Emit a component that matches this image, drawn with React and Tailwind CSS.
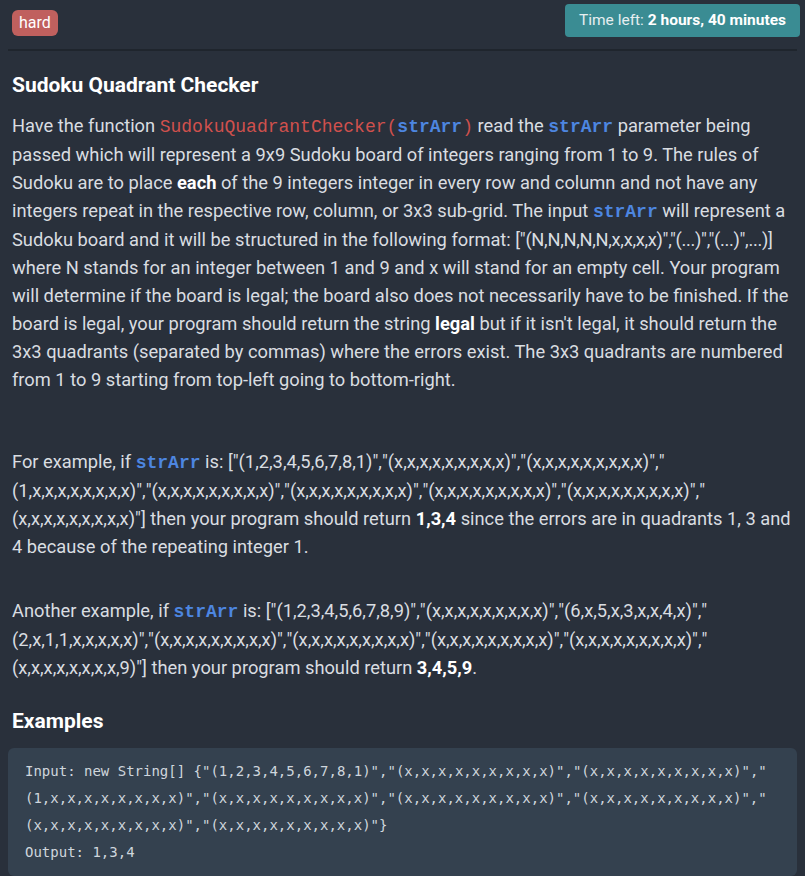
import React from "react";

const Fn = ({ children }) => (
  <code className="font-['Liberation_Mono',monospace] text-[18px] text-[#d0504d]">{children}</code>
);

const Arg = ({ children }) => (
  <code className="font-['Liberation_Mono',monospace] text-[18px] font-bold text-[#4d86e0]">{children}</code>
);

// row strings joined with a break opportunity after each separator
const Rows = ({ rows }) => (
  <>
    [
    {rows.map((r, i) => (
      <React.Fragment key={i}>
        "{r}"{i < rows.length - 1 ? "," : ""}
        {i < rows.length - 1 && <wbr />}
      </React.Fragment>
    ))}
    ]
  </>
);

const X = "(x,x,x,x,x,x,x,x,x)";

export default function App() {
  return (
    <div className="min-h-screen bg-[#29303b] font-['Roboto',sans-serif] text-[18.3px] text-[#d9dde1]">
      <div className="flex items-start justify-between pl-3 pr-[5px] pt-1">
        <span className="mt-[6px] rounded-md bg-[#c0605e] px-[7px] py-[1px] text-[16px] text-white">
          hard
        </span>
        <div className="rounded bg-[#3a8c93] px-[14px] py-[5px] text-[15.5px] text-[#e6eef0]">
          Time left: <b className="text-white">2 hours, 40 minutes</b>
        </div>
      </div>

      <hr className="mx-2 mt-3 border-t-2 border-[#1f252d]" />

      <div className="pl-3 pr-2">
        <h2 className="mt-[19px] text-[21px] font-bold text-white">Sudoku Quadrant Checker</h2>

        <p className="mt-[10px] leading-[28px]">
          Have the function <Fn>SudokuQuadrantChecker(</Fn>
          <Arg>strArr</Arg>
          <Fn>)</Fn> read the <Arg>strArr</Arg> parameter being passed which will represent a 9x9
          Sudoku board of integers ranging from 1 to 9. The rules of Sudoku are to place{" "}
          <b className="text-white">each</b> of the 9 integers integer in every row and column and not
          have any integers repeat in the respective row, column, or 3x3 sub-grid. The input{" "}
          <Arg>strArr</Arg> will represent a Sudoku board and it will be structured in the following
          format: <span className="tracking-[-0.3px]">["(N,N,N,N,N,x,x,x,x)","(...)","(...)",...)]</span>{" "}
          where N stands for an integer between 1 and 9 and x will stand for an empty cell. Your program
          will determine if the board is legal; the board also does not necessarily have to be finished.
          If the board is legal, your program should return the string{" "}
          <b className="text-white">legal</b> but if it isn't legal, it should return the 3x3 quadrants
          (separated by commas) where the errors exist. The 3x3 quadrants are numbered from 1 to 9
          starting from top-left going to bottom-right.
        </p>

        <p className="mt-[54px] leading-[28px]">
          For example, if <Arg>strArr</Arg> is:{" "}
          <Rows rows={["(1,2,3,4,5,6,7,8,1)", X, X, "(1,x,x,x,x,x,x,x,x)", X, X, X, X, X]} /> then your
          program should return <b className="text-white">1,3,4</b> since the errors are in quadrants 1,
          3 and 4 because of the repeating integer 1.
        </p>

        <p className="mt-[36px] leading-[28px]">
          Another example, if <Arg>strArr</Arg> is:{" "}
          <Rows
            rows={[
              "(1,2,3,4,5,6,7,8,9)",
              X,
              "(6,x,5,x,3,x,x,4,x)",
              "(2,x,1,1,x,x,x,x,x)",
              X,
              X,
              X,
              X,
              "(x,x,x,x,x,x,x,x,9)",
            ]}
          />{" "}
          then your program should return <b className="text-white">3,4,5,9</b>.
        </p>

        <h3 className="mt-[24px] text-[21px] font-bold text-white">Examples</h3>
      </div>

      <div className="mx-2 mt-[11px] rounded-md bg-[#34414f] px-[17px] py-[10px] font-['DejaVu_Sans_Mono',monospace] text-[14px] leading-[27px] text-[#cfd6dd]">
        <div className="break-all">
          Input: new String[] {"{"}"(1,2,3,4,5,6,7,8,1)","(x,x,x,x,x,x,x,x,x)","(x,x,x,x,x,x,x,x,x)","(1,x,x,x,x,x,x,x,x)","(x,x,x,x,x,x,x,x,x)","(x,x,x,x,x,x,x,x,x)","(x,x,x,x,x,x,x,x,x)","(x,x,x,x,x,x,x,x,x)","(x,x,x,x,x,x,x,x,x)"{"}"}
        </div>
        <div>Output: 1,3,4</div>
      </div>
    </div>
  );
}
